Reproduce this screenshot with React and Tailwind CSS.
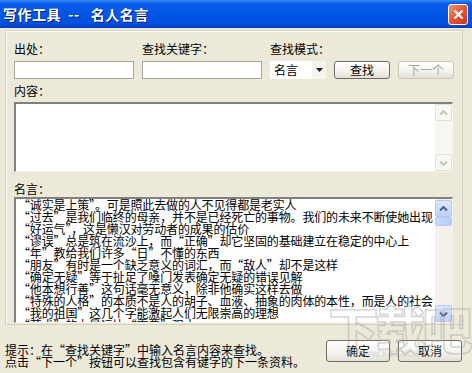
import React from 'react';

const quotes = [
    '“诚实是上策”。可是照此去做的人不见得都是老实人',
    '“过去”是我们临终的母亲，并不是已经死亡的事物。我们的未来不断使她出现',
    '“好运气”，这是懒汉对劳动者的成果的估价',
    '“谬误”总是筑在流沙上，而“正确”却它坚固的基础建立在稳定的中心上',
    '“年”教给我们许多“日”不懂的东西',
    '“朋友”有时是一个缺乏意义的词汇，而“敌人”却不是这样',
    '“确定无疑”等于扯足了嗓门发表确定无疑的错误见解',
    '“他本想行善”这句话毫无意义，除非他确实这样去做',
    '“特殊的人格”的本质不是人的胡子、血液、抽象的肉体的本性，而是人的社会',
    '“我的祖国”这几个字能激起人们无限崇高的理想',
    '“艺术”的力量远比“需要”强大',
];

function Chevron({ down, color }) {
    return (
        <svg width="9" height="6" viewBox="0 0 9 6">
            <path d={down ? 'M1 1.5 L4.5 5 L8 1.5' : 'M1 4.5 L4.5 1 L8 4.5'} fill="none" stroke={color} strokeWidth="2" />
        </svg>
    );
}

function XpButton({ children, disabled, className = '' }) {
    return (
        <div
            className={
                'flex items-center justify-center rounded-[3px] border bg-[linear-gradient(to_bottom,#ffffff,#f3f2ec_60%,#e3e0d5)] ' +
                (disabled ? 'border-[#c9c7ba] text-[#aca899] ' : 'border-[#6b6b6b] text-black ') +
                className
            }
        >
            {children}
        </div>
    );
}

export default function App() {
    return (
        <div
            lang="zh-CN"
            className="relative flex h-[373px] w-[472px] flex-col overflow-hidden bg-[#ece9d8] font-['Noto_Sans_CJK_SC',sans-serif] text-[12px] leading-[14px] text-black"
        >
            {/* title bar */}
            <div className="flex h-[28px] shrink-0 items-center justify-between bg-[linear-gradient(to_bottom,#3a8cf7_0%,#0a5ee9_12%,#0056e6_45%,#0052de_85%,#0240b8_100%)] pl-[3px] pr-[4px]">
                <span className="text-[14px] font-bold tracking-[0.5px] text-white [text-shadow:1px_1px_0_#0a1e80]">写作工具&nbsp;&nbsp;--&nbsp;&nbsp;&nbsp;名人名言</span>
                <div className="flex h-[21px] w-[20px] items-center justify-center rounded-[3px] border border-white bg-[linear-gradient(135deg,#f0937a,#e2502f_55%,#c9381a)]">
                    <svg width="11" height="11" viewBox="0 0 11 11">
                        <path d="M1.5 1.5 L9.5 9.5 M9.5 1.5 L1.5 9.5" stroke="#fff" strokeWidth="2.2" />
                    </svg>
                </div>
            </div>

            {/* etched panel */}
            <div className="ml-[5px] mt-[2px] h-[295px] w-[458px] shrink-0 overflow-hidden border border-[#d4d0c0] shadow-[inset_1px_1px_0_#ffffff]">
                <div className="mt-[11px] grid grid-cols-[128px_128px_128px] pl-[8px]">
                    <span>出处：</span>
                    <span>查找关键字：</span>
                    <span>查找模式：</span>
                </div>

                <div className="mt-[5px] flex h-[18px] items-stretch gap-[8px] pl-[8px]">
                    <div className="w-[120px] border border-[#a7a69c] bg-white" />
                    <div className="w-[120px] border border-[#a7a69c] bg-white" />
                    <div className="flex w-[56px] items-center bg-white pl-[4px]">
                        <span className="flex-1">名言</span>
                        <div className="flex h-full w-[14px] items-center justify-center bg-[#f4f3ee]">
                            <svg width="7" height="4" viewBox="0 0 7 4">
                                <path d="M0 0 H7 L3.5 4 Z" fill="#222" />
                            </svg>
                        </div>
                    </div>
                    <XpButton className="w-[56px]">查找</XpButton>
                    <XpButton disabled className="w-[56px]">下一个</XpButton>
                </div>

                <div className="mt-[5px] pl-[8px]">内容：</div>
                <div className="ml-[8px] mt-[4px] flex h-[70px] w-[439px] border-b border-l-2 border-r border-t-2 border-b-[#f5f4ee] border-l-[#808080] border-r-[#f5f4ee] border-t-[#808080] bg-white">
                    <div className="flex-1" />
                    <div className="flex w-[17px] flex-col bg-[#f7f6f0]">
                        <div className="flex h-[17px] items-center justify-center rounded-[2px] border border-[#e3e1d6] bg-[#f8f7f2]">
                            <Chevron color="#c6c4b8" />
                        </div>
                        <div className="flex-1" />
                        <div className="flex h-[17px] items-center justify-center rounded-[2px] border border-[#e3e1d6] bg-[#f8f7f2]">
                            <Chevron down color="#c6c4b8" />
                        </div>
                    </div>
                </div>

                <div className="mt-[10px] pl-[8px]">名言：</div>
                <div className="ml-[8px] mt-[1px] flex h-[126px] w-[439px] border-b border-l-2 border-r border-t-2 border-b-[#f5f4ee] border-l-[#808080] border-r-[#f5f4ee] border-t-[#808080] bg-white">
                    <div className="flex-1 overflow-hidden pl-[2px] leading-[12px] tracking-[-0.15px]">
                        {quotes.map((q) => (
                            <div key={q} className="whitespace-nowrap">
                                {q}
                            </div>
                        ))}
                    </div>
                    <div className="flex w-[17px] flex-col bg-[#f3f1ea] pt-[1px]">
                        <div className="flex h-[17px] items-center justify-center rounded-[2px] border border-[#b7c9f3] bg-[linear-gradient(to_bottom,#dde8fe,#bcd0fa)]">
                            <Chevron color="#4d6185" />
                        </div>
                        <div className="h-[9px] rounded-[2px] border border-[#b7c9f3] bg-[linear-gradient(to_right,#c9d9fc,#b8cdf8)]" />
                        <div className="flex-1" />
                        <div className="flex h-[17px] items-center justify-center rounded-[2px] border border-[#b7c9f3] bg-[linear-gradient(to_bottom,#dde8fe,#bcd0fa)]">
                            <Chevron down color="#4d6185" />
                        </div>
                    </div>
                </div>
            </div>

            {/* bottom row */}
            <div className="mt-[15px] flex items-start pl-[5px]">
                <div className="mt-[4px] w-[300px] leading-[12px]">
                    <div>提示：在“查找关键字”中输入名言内容来查找。</div>
                    <div>点击“下一个”按钮可以查找包含有键字的下一条资料。</div>
                </div>
                <div className="ml-[21px] flex gap-[8px]">
                    <XpButton className="h-[22px] w-[64px]">确定</XpButton>
                    <XpButton className="h-[22px] w-[64px]">取消</XpButton>
                </div>
            </div>

            {/* watermark */}
            <div className="pointer-events-none absolute left-[328px] top-[300px] flex w-[142px] flex-col items-center">
                <span className="text-[50px] font-black leading-[54px] tracking-[-3px] text-transparent [-webkit-text-stroke:1.5px_rgba(170,170,170,0.5)]">下载吧</span>
                <span className="-mt-[8px] text-[10px] text-[rgba(180,180,180,0.45)]">www.xiazaiba.com</span>
            </div>
        </div>
    );
}
